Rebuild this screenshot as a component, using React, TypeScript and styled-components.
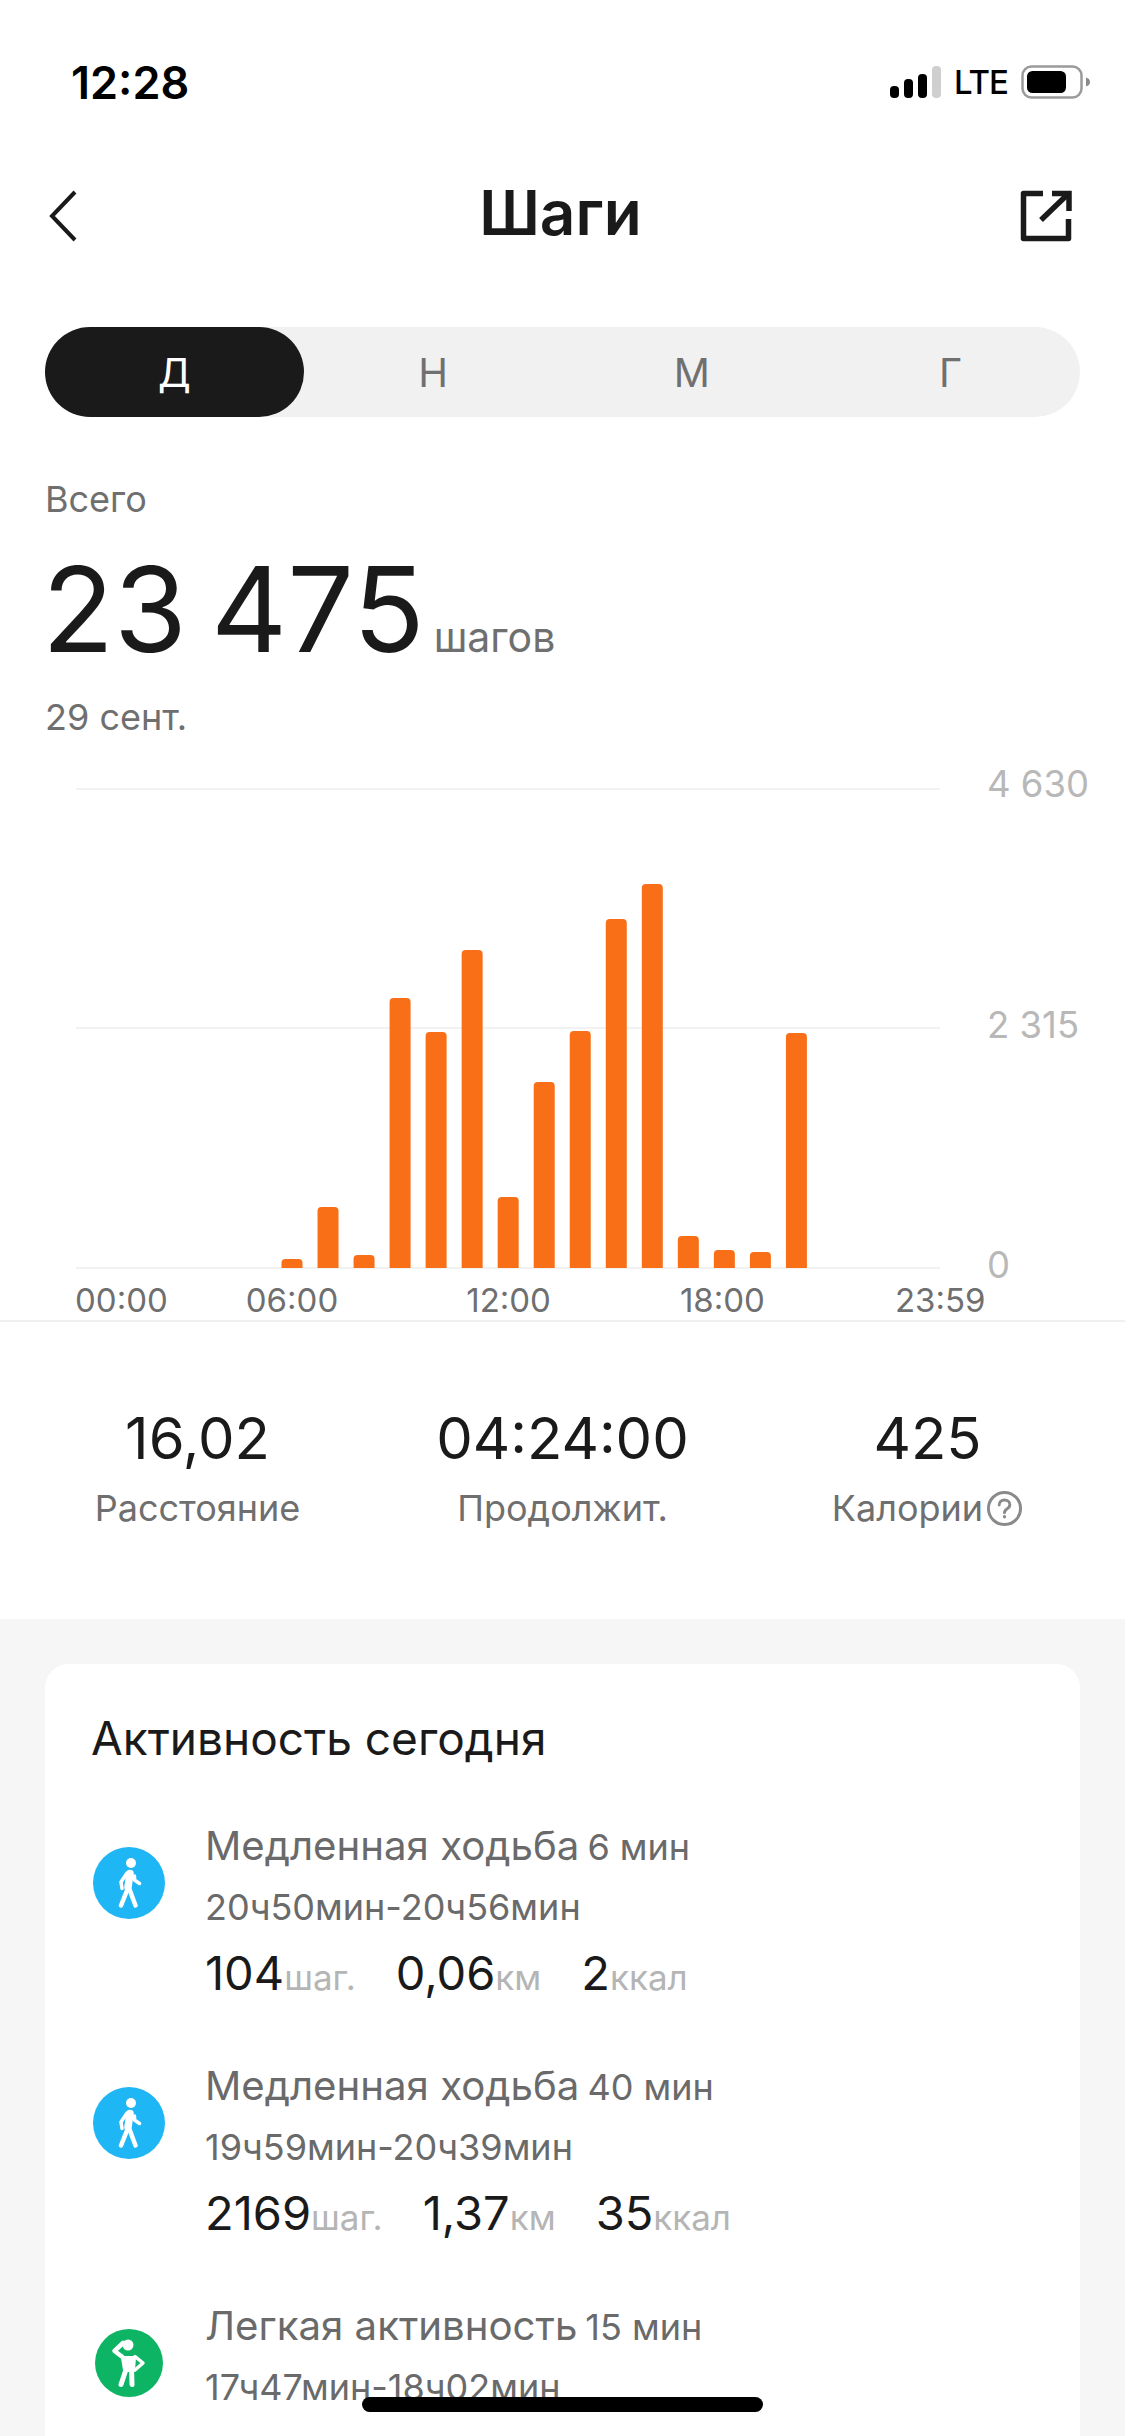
import React from "react";
import styled, { createGlobalStyle } from "styled-components";

const Global = createGlobalStyle`
  html, body { margin: 0; padding: 0; background: #fff; }
  * { box-sizing: border-box; }
`;

const Page = styled.div`
  position: relative;
  width: 1125px;
  height: 2436px;
  overflow: hidden;
  background: #fff;
  color: #1a1a1a;
  font-family: Inter, Roboto, sans-serif;
`;

const StatusBar = styled.div`
  height: 164px;
  padding: 0 34px 0 71px;
  display: flex;
  align-items: center;
  justify-content: space-between;
`;
const Time = styled.span`
  font-size: 45px;
  font-weight: 600;
  color: #000;
`;
const StatusRight = styled.div`
  display: flex;
  align-items: center;
`;
const Lte = styled.span`
  font-size: 33px;
  font-weight: 500;
  color: #000;
  margin: 0 13px;
  letter-spacing: -1px;
`;

const NavBar = styled.div`
  height: 104px;
  padding: 0 53px 0 49px;
  display: grid;
  grid-template-columns: 1fr auto 1fr;
  align-items: center;
`;
const NavEnd = styled.div`
  display: flex;
  justify-content: flex-end;
`;
const NavStart = styled.div`
  display: flex;
`;
const NavTitle = styled.h1`
  margin: -7px 0 0;
  font-size: 62px;
  font-weight: 600;
  line-height: 70px;
`;

const Tabs = styled.div`
  margin: 59px 45px 0;
  height: 90px;
  border-radius: 45px;
  background: #f1f1f1;
  display: grid;
  grid-template-columns: repeat(4, 1fr);
`;
const Tab = styled.div<{ $active?: boolean }>`
  display: flex;
  align-items: center;
  justify-content: center;
  border-radius: 45px;
  font-size: 40px;
  background: ${(p) => (p.$active ? "#1a1a1a" : "transparent")};
  color: ${(p) => (p.$active ? "#fff" : "#707070")};
`;

const Summary = styled.section`
  padding: 62px 45px 0;
`;
const MutedLine = styled.div`
  font-size: 36px;
  line-height: 40px;
  color: #6f6f6f;
`;
const TotalRow = styled.div`
  display: flex;
  align-items: baseline;
  margin: 30px 0 28px -3px;
  gap: 9px;
`;
const TotalValue = styled.span`
  font-size: 118px;
  line-height: 120px;
  font-weight: 400;
  word-spacing: -9px;
`;
const TotalUnit = styled.span`
  font-size: 41px;
  color: #6f6f6f;
`;

const ChartRow = styled.div`
  display: flex;
  height: 516px;
  margin-top: 27px;
  padding-left: 76px;
  gap: 47px;
`;
const Plot = styled.svg`
  display: block;
  margin-top: 24px;
  flex: none;
`;
const YAxis = styled.div`
  height: 521px;
  display: flex;
  flex-direction: column;
  justify-content: space-between;
  font-size: 36.5px;
  line-height: 40px;
  color: #b8b8b8;
`;
const XAxis = styled.div`
  height: 42px;
  padding-left: 75px;
  display: flex;
  font-size: 33px;
  line-height: 40px;
  color: #6f6f6f;
  border-bottom: 2px solid #f0f0f0;
`;
const XLabel = styled.span<{ $gap: number }>`
  margin-left: ${(p) => p.$gap}px;
`;

const Stats = styled.section`
  height: 297px;
  padding: 80px 15px 0;
  display: grid;
  grid-template-columns: repeat(3, 1fr);
`;
const Stat = styled.div`
  text-align: center;
`;
const StatValue = styled.div`
  font-size: 58px;
  line-height: 72px;
`;
const StatLabel = styled.div`
  margin-top: 12px;
  font-size: 36px;
  line-height: 44px;
  color: #6f6f6f;
  display: flex;
  align-items: center;
  justify-content: center;
  gap: 3px;
`;

const Gray = styled.section`
  background: #f6f6f6;
  padding: 45px 45px 0;
  height: 817px;
`;
const Card = styled.div`
  background: #fff;
  border-radius: 24px 24px 0 0;
  height: 900px;
  padding: 44px 46px 0;
`;
const CardTitle = styled.h2`
  margin: 0 0 53px;
  font-size: 46px;
  line-height: 60px;
  font-weight: 400;
`;
const Row = styled.div`
  display: flex;
  padding-left: 2px;
  margin-bottom: 58px;
`;
const IconSlot = styled.div`
  width: 72px;
  height: 72px;
  margin-top: 26px;
  margin-right: 40px;
  flex: none;
  display: flex;
  align-items: center;
  justify-content: center;
`;
const IconDisc = styled.div<{ $color: string; $size: number }>`
  width: ${(p) => p.$size}px;
  height: ${(p) => p.$size}px;
  border-radius: 50%;
  background: ${(p) => p.$color};
  display: flex;
  align-items: center;
  justify-content: center;
`;
const RowBody = styled.div`
  min-width: 0;
`;
const RowTitle = styled.div`
  height: 50px;
  font-size: 40.2px;
  line-height: 50px;
  color: #6a6a6a;
  display: flex;
  align-items: baseline;
  gap: 8px;
`;
const RowDuration = styled.span`
  font-size: 36px;
`;
const RowTime = styled.div`
  margin-top: 11px;
  font-size: 36px;
  line-height: 50px;
  color: #6a6a6a;
`;
const Metrics = styled.div`
  margin-top: 11px;
  display: flex;
  align-items: baseline;
  gap: 40px;
  height: 60px;
  line-height: 60px;
`;
const Metric = styled.span`
  font-size: 47px;
  color: #1a1a1a;
`;
const Unit = styled.span`
  font-size: 35px;
  color: #b5b5b5;
`;

const HomeBar = styled.div`
  position: absolute;
  left: 362px;
  top: 2397px;
  width: 401px;
  height: 15px;
  border-radius: 8px;
  background: #000;
`;

const bars = [
  1259, 1207, 1255, 998, 1032, 950, 1197, 1082, 1031, 919, 884, 1236, 1250, 1252, 1033,
];

const Signal = () => (
  <svg width="51" height="32" viewBox="0 0 51 32">
    <rect x="0" y="20" width="9" height="12" rx="4" fill="#000" />
    <rect x="14" y="13" width="9" height="19" rx="4" fill="#000" />
    <rect x="28" y="8" width="9" height="24" rx="4" fill="#000" />
    <rect x="42" y="0" width="9" height="32" rx="4" fill="#cfcfcf" />
  </svg>
);
const Battery = () => (
  <svg width="70" height="34" viewBox="0 0 70 34">
    <rect x="1.500" y="1.500" width="59" height="31" rx="9" fill="none" stroke="#9a9a9a" strokeWidth="2.500" />
    <rect x="6" y="6" width="39" height="22" rx="5.500" fill="#000" />
    <path d="M65 12.500c2.500.6 4 2.200 4 4.500s-1.500 3.900-4 4.500z" fill="#8a8a8a" />
  </svg>
);
const Back = () => (
  <svg width="28" height="52" viewBox="0 0 28 52" fill="none">
    <path d="M26 2 3 26l23 24" stroke="#1a1a1a" strokeWidth="4" />
  </svg>
);
const Share = () => (
  <svg width="52" height="52" viewBox="0 0 52 52" fill="none" stroke="#1a1a1a" strokeWidth="5.500">
    <path d="M23 3.500H3.500v45h45V29" strokeLinejoin="round" />
    <path d="M21 30 47 5" />
    <path d="M32 3.500h17V21" />
  </svg>
);
const Help = () => (
  <svg width="37" height="37" viewBox="0 0 38 38" fill="none" stroke="#8a8a8a" strokeWidth="3">
    <circle cx="19" cy="19" r="16.500" />
    <path d="M13.500 15.500c0-3.200 2.400-5.200 5.500-5.200s5.500 2 5.500 4.800c0 2.200-1.300 3.200-3 4.300-1.700 1-2.500 2-2.500 3.900" strokeLinecap="round" />
    <circle cx="19" cy="27.500" r="1.700" fill="#8a8a8a" stroke="none" />
  </svg>
);
const Walker = () => (
  <svg width="28" height="50" viewBox="0 0 28 50" fill="none" stroke="#fff" strokeLinecap="round" strokeLinejoin="round">
    <circle cx="16" cy="5" r="5" fill="#fff" stroke="none" />
    <path d="M15 15.500 13 29" strokeWidth="7.500" />
    <path d="M12 15 6 24l1 6.500" strokeWidth="3.500" />
    <path d="M19.500 18v4l5 3.500" strokeWidth="3.500" />
    <path d="M13 30 6 47.500" strokeWidth="4.500" />
    <path d="M14 30l6.500 17.500" strokeWidth="4.500" />
  </svg>
);
const Stretcher = () => (
  <svg width="36" height="50" viewBox="0 0 36 50" fill="none" stroke="#fff" strokeLinecap="round" strokeLinejoin="round">
    <circle cx="17" cy="7" r="5.500" fill="#fff" stroke="none" />
    <path d="M12 5 3.500 13l8 6" strokeWidth="4.500" />
    <path d="M12 20h11l-1 12h-8z" fill="#fff" strokeWidth="4" />
    <path d="M24 18.500l8 6.500-8 7" strokeWidth="3.500" />
    <path d="M15.500 30 10 46.500" strokeWidth="5" />
    <path d="M20.500 30 21 46.500" strokeWidth="5" />
  </svg>
);

type Entry = {
  kind: "walk" | "light";
  title: string;
  dur: string;
  time: string;
  m: [string, string][];
};
const entries: Entry[] = [
  { kind: "walk", title: "Медленная ходьба", dur: "6 мин", time: "20ч50мин-20ч56мин", m: [["104", "шаг."], ["0,06", "км"], ["2", "ккал"]] },
  { kind: "walk", title: "Медленная ходьба", dur: "40 мин", time: "19ч59мин-20ч39мин", m: [["2169", "шаг."], ["1,37", "км"], ["35", "ккал"]] },
  { kind: "light", title: "Легкая активность", dur: "15 мин", time: "17ч47мин-18ч02мин", m: [["101", "шаг."], ["0,06", "км"], ["2", "ккал"]] },
];

export default function App() {
  return (
    <Page>
      <Global />
      <StatusBar>
        <Time>12:28</Time>
        <StatusRight>
          <Signal />
          <Lte>LTE</Lte>
          <Battery />
        </StatusRight>
      </StatusBar>
      <NavBar>
        <NavStart>
          <Back />
        </NavStart>
        <NavTitle>Шаги</NavTitle>
        <NavEnd>
          <Share />
        </NavEnd>
      </NavBar>
      <Tabs>
        <Tab $active>Д</Tab>
        <Tab>Н</Tab>
        <Tab>М</Tab>
        <Tab>Г</Tab>
      </Tabs>
      <Summary>
        <MutedLine>Всего</MutedLine>
        <TotalRow>
          <TotalValue>23 475</TotalValue>
          <TotalUnit>шагов</TotalUnit>
        </TotalRow>
        <MutedLine>29 сент.</MutedLine>
      </Summary>
      <ChartRow>
        <Plot width="864" height="482" viewBox="0 0 864 482">
          {[1, 240, 480].map((y) => (
            <rect key={y} x="0" y={y - 1} width="864" height="2" fill="#f2f2f2" />
          ))}
          {bars.map((top, i) => {
            const x = 205.5 + i * 36.03;
            const y = top - 788;
            return <path key={i} d={`M${x} 480V${y + 4}q0-4 4-4h13q4 0 4 4V480z`} fill="#f96f18" />;
          })}
        </Plot>
        <YAxis>
          <span>4 630</span>
          <span>2 315</span>
          <span>0</span>
        </YAxis>
      </ChartRow>
      <XAxis>
        <XLabel $gap={0}>00:00</XLabel>
        <XLabel $gap={78}>06:00</XLabel>
        <XLabel $gap={128}>12:00</XLabel>
        <XLabel $gap={129}>18:00</XLabel>
        <XLabel $gap={130}>23:59</XLabel>
      </XAxis>
      <Stats>
        <Stat>
          <StatValue>16,02</StatValue>
          <StatLabel>Расстояние</StatLabel>
        </Stat>
        <Stat>
          <StatValue>04:24:00</StatValue>
          <StatLabel>Продолжит.</StatLabel>
        </Stat>
        <Stat>
          <StatValue>425</StatValue>
          <StatLabel>
            Калории
            <Help />
          </StatLabel>
        </Stat>
      </Stats>
      <Gray>
        <Card>
          <CardTitle>Активность сегодня</CardTitle>
          {entries.map((e, i) => (
            <Row key={i}>
              <IconSlot>
                <IconDisc $color={e.kind === "walk" ? "#1fb6f6" : "#0db463"} $size={e.kind === "walk" ? 72 : 68}>
                  {e.kind === "walk" ? <Walker /> : <Stretcher />}
                </IconDisc>
              </IconSlot>
              <RowBody>
                <RowTitle>
                  {e.title}
                  <RowDuration>{e.dur}</RowDuration>
                </RowTitle>
                <RowTime>{e.time}</RowTime>
                <Metrics>
                  {e.m.map(([v, u]) => (
                    <span key={u}>
                      <Metric>{v}</Metric>
                      <Unit>{u}</Unit>
                    </span>
                  ))}
                </Metrics>
              </RowBody>
            </Row>
          ))}
        </Card>
      </Gray>
      <HomeBar />
    </Page>
  );
}
